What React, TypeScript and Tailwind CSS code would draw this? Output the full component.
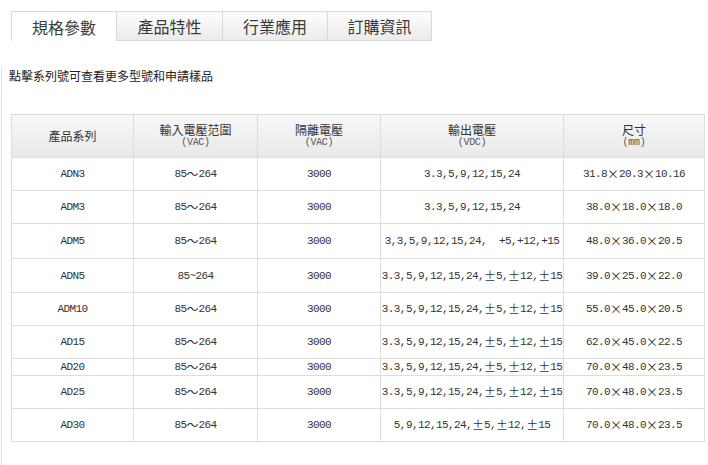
import React from 'react';

type Row = {
  series: string;
  input: string;
  iso: string;
  out: string;
  size: string;
  h: string;
};

// 規格表資料
const rows: Row[] = [
  { series: 'ADN3', input: '85～264', iso: '3000', out: '3.3,5,9,12,15,24', size: '31.8×20.3×10.16', h: 'h-[33px]' },
  { series: 'ADM3', input: '85～264', iso: '3000', out: '3.3,5,9,12,15,24', size: '38.0×18.0×18.0', h: 'h-[33px]' },
  { series: 'ADM5', input: '85～264', iso: '3000', out: '3,3,5,9,12,15,24,  +5,+12,+15', size: '48.0×36.0×20.5', h: 'h-[35px]' },
  { series: 'ADN5', input: '85~264', iso: '3000', out: '3.3,5,9,12,15,24,±5,±12,±15', size: '39.0×25.0×22.0', h: 'h-[34px]' },
  { series: 'ADM10', input: '85～264', iso: '3000', out: '3.3,5,9,12,15,24,±5,±12,±15', size: '55.0×45.0×20.5', h: 'h-[33px]' },
  { series: 'AD15', input: '85～264', iso: '3000', out: '3.3,5,9,12,15,24,±5,±12,±15', size: '62.0×45.0×22.5', h: 'h-[33px]' },
  { series: 'AD20', input: '85～264', iso: '3000', out: '3.3,5,9,12,15,24,±5,±12,±15', size: '70.0×48.0×23.5', h: 'h-[17px]' },
  { series: 'AD25', input: '85～264', iso: '3000', out: '3.3,5,9,12,15,24,±5,±12,±15', size: '70.0×48.0×23.5', h: 'h-[33px]' },
  { series: 'AD30', input: '85～264', iso: '3000', out: '5,9,12,15,24,±5,±12,±15', size: '70.0×48.0×23.5', h: 'h-[33px]' },
];

const tabs = ['規格參數', '產品特性', '行業應用', '訂購資訊'];

// 全形字元 (～ × ±) 佔 12px 寬
function Wide({ text }: { text: string }) {
  return (
    <>
      {text.split('').map((ch, i) =>
        ch === '～' || ch === '×' || ch === '±' ? (
          <span
            key={i}
            className="inline-block w-[12px] text-center tracking-normal text-[12px] font-['Noto_Sans_CJK_TC',sans-serif]"
          >
            {ch}
          </span>
        ) : (
          <span key={i}>{ch}</span>
        )
      )}
    </>
  );
}

const cellBase = 'flex items-center justify-center border-r border-[#dddddd] whitespace-pre';
const cols = ['w-[122px]', 'w-[124px]', 'w-[123px]', 'w-[183px]'];

export default function App() {
  return (
    <div className="w-[708px] h-[465px] bg-white overflow-hidden pt-[11px] text-[#333333] font-['Noto_Sans_CJK_TC',sans-serif]">
      {/* 分頁標籤 */}
      <div className="flex pl-[11px] h-[30px]">
        {tabs.map((t, i) => (
          <div
            key={t}
            className={`flex items-center justify-center border-t border-l border-[#d9d9d9] text-[16px] leading-none text-[#3a3a3a] ${
              i === 0 ? 'w-[105px] bg-white' : 'bg-gradient-to-b from-[#fdfdfd] to-[#ebebeb] border-b'
            } ${i === 1 ? 'w-[106px]' : ''} ${i === 2 ? 'w-[105px]' : ''} ${i === 3 ? 'w-[105px] border-r' : ''}`}
          >
            {t}
          </div>
        ))}
      </div>

      {/* 內容區 */}
      <div className="ml-[1px] h-[422px] border-l border-b border-[#dddddd]">
        <p className="mt-[27px] ml-[7px] text-[12px] leading-[16px] text-[#222222]">
          點擊系列號可查看更多型號和申請樣品
        </p>

        <div className="mt-[30px] ml-[9px] w-[694px] border-t border-l border-r border-[#dddddd] text-[11px] tracking-[-0.6px] font-['Liberation_Mono','Noto_Sans_CJK_TC',monospace]">
          {/* 表頭 */}
          <div className="flex h-[43px] border-b border-[#dddddd] bg-gradient-to-b from-[#f8f8f8] to-[#e9e9e9]">
            {[
              ['產品系列', ''],
              ['輸入電壓范圍', '(VAC)'],
              ['隔離電壓', '(VAC)'],
              ['輸出電壓', '(VDC)'],
              ['尺寸', '(mm)'],
            ].map(([a, b], i) => (
              <div
                key={a}
                className={`flex flex-col items-center justify-center ${i < 4 ? `border-r border-[#dddddd] ${cols[i]}` : 'flex-1'}`}
              >
                <span className="block h-[14px] text-[12px] leading-[14px] tracking-normal font-['Noto_Sans_CJK_TC',sans-serif]">{a}</span>
                {b && <span className="block h-[12px] text-[10px] leading-[12px] tracking-[-0.3px] text-[#555555]">{b}</span>}
              </div>
            ))}
          </div>

          {/* 資料列 */}
          {rows.map((r) => (
            <div key={r.series} className={`flex border-b border-[#dddddd] leading-[16px] ${r.h}`}>
              <div className={`${cellBase} ${cols[0]}`}>{r.series}</div>
              <div className={`${cellBase} ${cols[1]}`}>
                <Wide text={r.input} />
              </div>
              <div className={`${cellBase} ${cols[2]}`}>{r.iso}</div>
              <div className={`${cellBase} ${cols[3]}`}>
                <Wide text={r.out} />
              </div>
              <div className="flex-1 flex items-center justify-center whitespace-pre">
                <Wide text={r.size} />
              </div>
            </div>
          ))}
        </div>
      </div>
    </div>
  );
}
